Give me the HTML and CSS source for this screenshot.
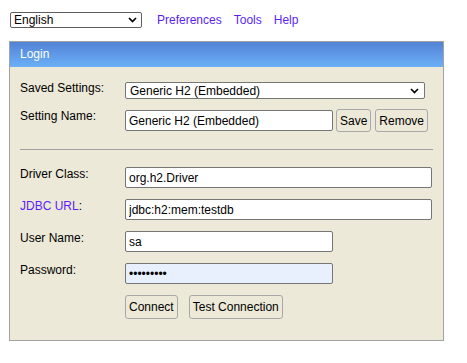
FILE: index.html
```
<!DOCTYPE html>
<html lang="en">
<head>
    <meta charset="UTF-8">
    <meta name="viewport" content="width=device-width, initial-scale=1.0">
    <title>H2 Console</title>
    <link rel="stylesheet" href="styles.css">
</head>
<body>
    <div class="topbar">
        <select class="lang-select">
            <option>English</option>
            <option>Deutsch</option>
            <option>Français</option>
        </select>
        <a href="#" class="top-link first">Preferences</a>
        <a href="#" class="top-link">Tools</a>
        <a href="#" class="top-link">Help</a>
    </div>

    <form class="login" id="login">
        <div class="login-head">Login</div>
        <div class="login-body">
            <div class="row row-saved">
                <label for="setting">Saved Settings:</label>
                <select id="setting" class="combo">
                    <option>Generic H2 (Embedded)</option>
                    <option>Generic H2 (Server)</option>
                </select>
            </div>
            <div class="row row-name">
                <label for="name">Setting Name:</label>
                <div class="controls">
                    <input type="text" id="name" class="field short" value="Generic H2 (Embedded)">
                    <button type="button" class="btn save">Save</button>
                    <button type="button" class="btn remove">Remove</button>
                </div>
            </div>

            <hr class="divider">

            <div class="row row-first">
                <label for="driver">Driver Class:</label>
                <input type="text" id="driver" class="field long" value="org.h2.Driver">
            </div>
            <div class="row">
                <label for="url"><a href="#" class="label-link">JDBC URL</a>:</label>
                <input type="text" id="url" class="field long" value="jdbc:h2:mem:testdb">
            </div>
            <div class="row">
                <label for="user">User Name:</label>
                <input type="text" id="user" class="field short" value="sa">
            </div>
            <div class="row">
                <label for="password">Password:</label>
                <input type="password" id="password" class="field short filled" value="password1">
            </div>
            <div class="row">
                <span class="spacer"></span>
                <div class="controls">
                    <button type="button" class="btn connect">Connect</button>
                    <button type="button" class="btn test">Test Connection</button>
                </div>
            </div>
        </div>
    </form>
</body>
</html>
```
FILE: styles.css
```
body {
    margin: 0;
    padding: 0;
    background-color: #fff;
    font-family: "Liberation Sans", Arial, sans-serif;
    font-size: 12px;
    color: #000;
}
select,
input,
button {
    font-family: "Liberation Sans", Arial, sans-serif;
    font-size: 12px;
    color: #000;
    box-sizing: border-box;
    margin: 0;
}
.topbar {
    display: flex;
    align-items: center;
    margin: 12px 0 0 10px;
    height: 16px;
}
.lang-select,
.combo {
    appearance: none;
    -webkit-appearance: none;
    background-color: #fff;
    background-image: url("data:image/svg+xml;utf8,<svg xmlns='http://www.w3.org/2000/svg' width='9' height='6'><path d='M1 1l3.5 3.5L8 1' fill='none' stroke='%23000' stroke-width='1.7'/></svg>");
    background-repeat: no-repeat;
    border: 1px solid #767676;
    border-radius: 2px;
    outline: none;
}
.lang-select {
    width: 132px;
    height: 16px;
    padding: 0 14px 0 3px;
    background-position: right 4px center;
    border-color: #5f5f5f;
}
.top-link {
    color: #5b1ff5;
    text-decoration: none;
    margin-left: 12px;
}
.top-link.first {
    margin-left: 15px;
}
.login {
    width: 435px;
    box-sizing: border-box;
    margin: 13px 0 0 9px;
    background-color: #ece9d8;
    border: 1px solid #a2a2a2;
}
.login-head {
    height: 25px;
    line-height: 24px;
    padding-left: 10px;
    color: #fff;
    background: linear-gradient(#5282d5, #6cb0f7);
}
.login-body {
    padding: 15px 10px 21px 10px;
}
.row {
    display: flex;
    align-items: flex-start;
    margin-top: 11px;
}
.row-saved {
    margin-top: 0;
}
.row-name {
    margin-top: 10px;
}
.row-first {
    margin-top: 0;
}
.row label,
.spacer {
    width: 105px;
    flex: none;
    line-height: 14px;
}
.row-saved label {
    margin-top: -1px;
}
.label-link {
    color: #5b1ff5;
    text-decoration: none;
}
.controls {
    display: flex;
    align-items: center;
}
.combo {
    width: 300px;
    height: 17px;
    padding: 0 18px 0 4px;
    background-position: right 5px center;
}
.field {
    height: 21px;
    padding: 0 3px;
    border: 1px solid #767676;
    border-radius: 2px;
    background-color: #fff;
    outline: none;
}
.field.short {
    width: 208px;
}
.field.long {
    width: 307px;
}
.field.filled {
    background-color: #e8f0fe;
}
.btn {
    height: 23px;
    padding: 0 3px;
    background-color: transparent;
    border: 1px solid #a8a8a8;
    border-radius: 3px;
    cursor: pointer;
}
.save {
    margin-left: 3px;
}
.remove {
    margin-left: 4px;
}
.connect,
.test {
    height: 24px;
}
.test {
    margin-left: 11px;
}
.divider {
    border: none;
    border-top: 1px solid #a0a0a0;
    margin: 17px 0 17px 0;
    height: 0;
}
```
